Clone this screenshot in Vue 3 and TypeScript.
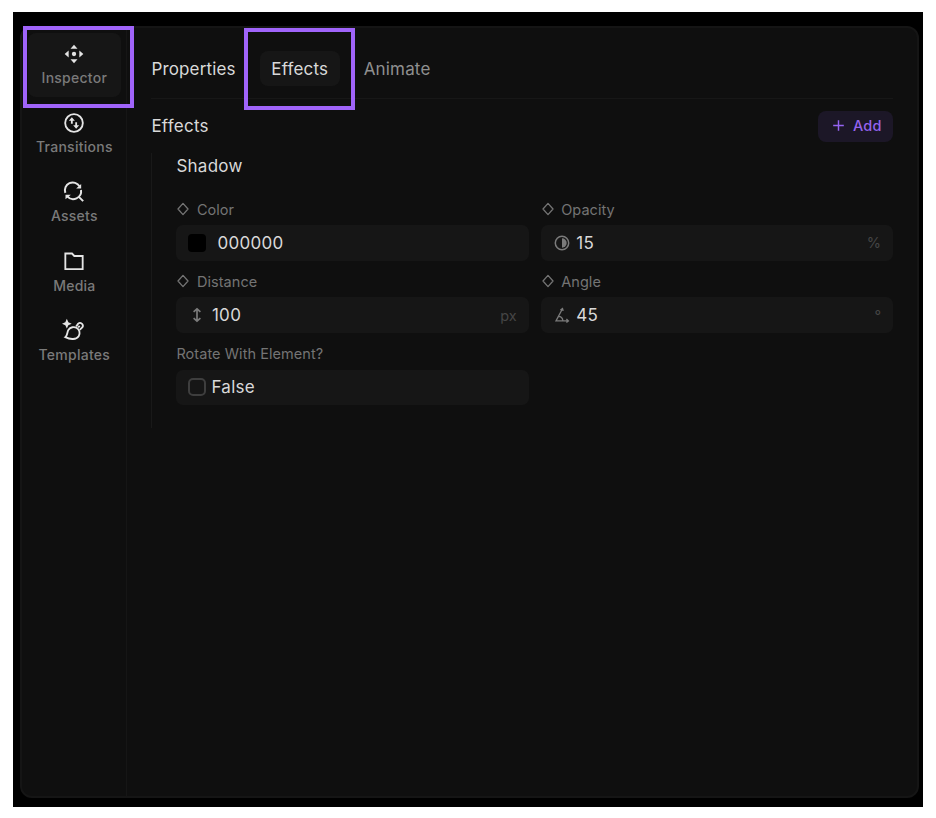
<script setup lang="ts">
import { ref } from 'vue'

interface NavItem {
  id: string
  label: string
}

interface Field {
  id: string
  label: string
  value: string
  unit?: string
  animatable: boolean
}

const navItems: NavItem[] = [
  { id: 'inspector', label: 'Inspector' },
  { id: 'transitions', label: 'Transitions' },
  { id: 'assets', label: 'Assets' },
  { id: 'media', label: 'Media' },
  { id: 'templates', label: 'Templates' },
]

const tabs: string[] = ['Properties', 'Effects', 'Animate']

const fields: Field[] = [
  { id: 'color', label: 'Color', value: '000000', animatable: true },
  { id: 'opacity', label: 'Opacity', value: '15', unit: '%', animatable: true },
  { id: 'distance', label: 'Distance', value: '100', unit: 'px', animatable: true },
  { id: 'angle', label: 'Angle', value: '45', unit: '°', animatable: true },
  { id: 'rotate', label: 'Rotate With Element?', value: 'False', animatable: false },
]

const activeNav = ref('inspector')
const activeTab = ref('Effects')
</script>

<template>
  <div class="page">
    <div class="stage">
      <div class="panel">
        <nav class="sidebar">
          <button
            v-for="item in navItems"
            :key="item.id"
            class="nav-item"
            :class="{ active: item.id === activeNav }"
            @click="activeNav = item.id"
          >
            <svg class="nav-icon" viewBox="0 0 24 24" fill="none" stroke="currentColor" stroke-width="2.2">
              <g v-if="item.id === 'inspector'" fill="currentColor" stroke="none">
                <path d="M12 .8 16.2 5.6H7.8ZM12 23.2 7.8 18.4h8.4ZM.8 12 5.6 7.8v8.4ZM23.2 12 18.4 16.2V7.8Z" />
                <circle cx="12" cy="12" r="2.6" />
              </g>
              <g v-else-if="item.id === 'transitions'">
                <circle cx="12" cy="12" r="10.6" />
                <path d="M9.4 13V8M14.6 11v5" />
                <path d="M9.4 5 13 9.4H5.8ZM14.6 19 11 14.6h7.2Z" fill="currentColor" stroke="none" />
              </g>
              <g v-else-if="item.id === 'assets'" stroke-width="2.4">
                <path d="M1.6 13A9.4 9.4 0 0 1 18.6 5.2M20.4 9.6A9.4 9.4 0 0 1 4 17.2M17.2 17.2l5.8 5.8" />
                <path d="M20.6 2.4v5.4h-6ZM1.8 20.8v-5.6h6.4Z" fill="currentColor" stroke="none" />
              </g>
              <path v-else-if="item.id === 'media'" d="M1.6 1.8h8l2.8 3h10v15.8H1.6Z" />
              <g v-else>
                <path d="M1.6 19.4C4.4 17.4 3.4 13.8 5.4 10.6c2.2-3.4 6.8-4.2 10-2.2s4.4 6.4 2.2 9.8c-2.8 4.2-9.8 4.4-16 1.2Z" />
                <path d="M14.6 6.6 17 3.2a3.4 3.4 0 0 1 5.2 4.2l-3.4 3.2M17 7.8l1.8-2" />
                <path d="M3.4-2.6 5.2 1.4 9.2 3.2 5.2 5 3.4 9 1.6 5-2.4 3.2 1.6 1.4Z" fill="currentColor" stroke="none" />
              </g>
            </svg>
            <span>{{ item.label }}</span>
          </button>
        </nav>

        <main class="content">
          <div class="tabs">
            <button
              v-for="tab in tabs"
              :key="tab"
              class="tab"
              :class="[tab.toLowerCase(), { active: tab === activeTab }]"
              @click="activeTab = tab"
            >
              {{ tab }}
            </button>
          </div>

          <div class="section-head">
            <h2>Effects</h2>
            <button class="add">
              <svg viewBox="0 0 12 12" stroke="currentColor" stroke-width="1.6"><path d="M6 .2v11.6M.2 6h11.6" /></svg>
              Add
            </button>
          </div>

          <section class="effect">
            <h3>Shadow</h3>
            <div class="grid">
              <div v-for="field in fields" :key="field.id" class="field">
                <div class="label">
                  <svg v-if="field.animatable" class="diamond" viewBox="0 0 12 14" fill="none" stroke="currentColor" stroke-width="1.3">
                    <path d="M6 1.4 11 7 6 12.6 1 7Z" stroke-linejoin="round" />
                  </svg>
                  {{ field.label }}
                </div>
                <div class="input" :class="field.id">
                  <span v-if="field.id === 'color'" class="swatch"></span>
                  <svg v-else-if="field.id === 'opacity'" class="glyph" viewBox="0 0 18 18" fill="none" stroke="currentColor" stroke-width="1.5">
                    <circle cx="9" cy="9" r="6.7" />
                    <path d="M9 4.3a4.7 4.7 0 0 1 0 9.4Z" fill="currentColor" stroke="none" />
                  </svg>
                  <svg v-else-if="field.id === 'distance'" class="glyph" viewBox="0 0 18 18" fill="none" stroke="currentColor" stroke-width="1.7">
                    <path d="M9 3.2v11.6M5.6 5.9 9 2.9l3.4 3M5.6 12.1 9 15.1l3.4-3" />
                  </svg>
                  <svg v-else-if="field.id === 'angle'" class="glyph" viewBox="0 0 18 18" fill="none" stroke="currentColor" stroke-width="1.3">
                    <path d="M9.2 3.2 3 14.9h11.5M5.3 10.4a4.8 4.8 0 0 1 4.6 4.3M7.4 4l2.1-1.5.7 2.4M13.4 13.1l2 1.8-2 1.6" />
                  </svg>
                  <span v-else class="checkbox"></span>
                  <span class="value">{{ field.value }}</span>
                  <span v-if="field.unit" class="unit">{{ field.unit }}</span>
                </div>
              </div>
            </div>
          </section>
        </main>
      </div>
      <div class="highlight highlight-nav"></div>
      <div class="highlight highlight-tab"></div>
    </div>
  </div>
</template>

<style>
body {
  background: #fff;
}
</style>

<style scoped>
* {
  box-sizing: border-box;
}

.page {
  height: 818px;
  padding: 12px 13px 11px;
  font-family: Inter, "Liberation Sans", sans-serif;
  color: #d9d9d9;
}

.stage {
  position: relative;
  height: 795px;
  padding: 14px 4px 9px 7px;
  background: #000;
}

.panel {
  display: flex;
  height: 772px;
  border: 2px solid #151515;
  border-radius: 12px;
  background: #0f0f0f;
}

button {
  border: 0;
  padding: 0;
  background: none;
  font: inherit;
  color: inherit;
}

.sidebar {
  display: flex;
  flex: none;
  flex-direction: column;
  gap: 5.2px;
  width: 105.4px;
  padding: 5px 5.7px 5px 6px;
  border-right: 1px solid #161616;
}

.nav-item {
  display: flex;
  flex-direction: column;
  align-items: center;
  height: 64px;
  padding-top: 11px;
  border-radius: 8px;
  font-size: 14px;
  font-weight: 500;
  line-height: 20px;
  letter-spacing: 0.26px;
  color: #7a7a7a;
  white-space: nowrap;
}

.nav-item.active {
  background: #161616;
}

.nav-icon {
  width: 20px;
  height: 20px;
  margin-bottom: 4px;
  color: #e4e4e4;
  overflow: visible;
}

.content {
  flex: 1;
  padding: 0 24px;
}

.tabs {
  display: flex;
  align-items: center;
  gap: 24px;
  height: 71px;
  padding-top: 11px;
  border-bottom: 1px solid #171717;
}

.tab {
  height: 35px;
  font-size: 17px;
  letter-spacing: 0.16px;
}

.tab.active {
  width: 80px;
  border-radius: 8px;
  background: #161616;
}

.tab.animate {
  color: #8f8f8f;
}

.section-head {
  display: flex;
  align-items: center;
  justify-content: space-between;
  height: 54px;
}

h2,
h3 {
  margin: 0;
  font-size: 17px;
  font-weight: 400;
  letter-spacing: 0.25px;
}

.add {
  display: flex;
  align-items: center;
  gap: 9px;
  width: 75px;
  height: 31px;
  padding-left: 15px;
  padding-bottom: 1px;
  border-radius: 8px;
  background: #1c1727;
  color: #9563f0;
  font-size: 14.5px;
  font-weight: 500;
  letter-spacing: 0.2px;
}

.add svg {
  width: 11px;
  height: 11px;
}

.effect {
  height: 275px;
  padding-left: 24px;
  border-left: 1px solid #191919;
}

h3 {
  line-height: 26px;
}

.grid {
  display: grid;
  grid-template-columns: 1fr 1fr;
  column-gap: 12px;
  grid-auto-rows: 72.3px;
  padding-top: 20px;
}

.label {
  display: flex;
  align-items: center;
  height: 20px;
  font-size: 14.5px;
  letter-spacing: 0.06px;
  color: #747474;
}

.diamond {
  width: 12px;
  height: 14px;
  margin: 0 7.5px 0 1px;
}

.input {
  display: flex;
  align-items: center;
  height: 35.5px;
  margin-top: 6px;
  padding: 0 12px;
  border-radius: 7px;
  background: #161616;
}

.glyph {
  width: 18px;
  height: 18px;
  margin-right: 5.5px;
  color: #7b7b7b;
}

.swatch {
  width: 18px;
  height: 18px;
  margin-right: 11px;
  border-radius: 4px;
  background: #000;
}

.checkbox {
  width: 18px;
  height: 18px;
  margin-right: 5px;
  border: 2px solid #3e3e3e;
  border-radius: 5px;
}

.value {
  font-size: 17px;
  letter-spacing: 0.3px;
}

.unit {
  margin-left: auto;
  color: #454545;
  font-size: 14.5px;
}

.highlight {
  position: absolute;
  width: 111px;
  height: 82px;
  border: 4px solid #a064fa;
}

.highlight-nav {
  left: 10px;
  top: 14px;
}

.highlight-tab {
  left: 231px;
  top: 16px;
}
</style>
